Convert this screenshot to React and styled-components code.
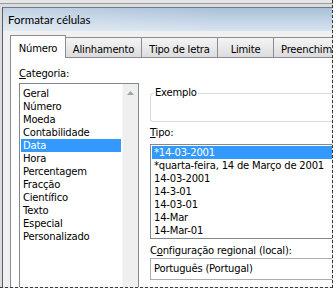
import styled, { createGlobalStyle } from "styled-components";

const GlobalStyle = createGlobalStyle`
  html, body { margin: 0; padding: 0; background: #fff; }
  body {
    font-family: "DejaVu Sans", "Liberation Sans", sans-serif;
    font-size: 10px;
    letter-spacing: -0.2px;
    color: #000;
  }
`;

const Screen = styled.div`
  width: 336px;
  height: 289px;
  overflow: hidden;
  background: #fff;
`;

const Capture = styled.div`
  box-sizing: border-box;
  width: 333px;
  height: 288px;
  overflow: hidden;
  padding: 7px 0 0 2px;
  border-right: 1px dashed #3a3a3a;
  border-bottom: 1px dashed #3a3a3a;
  background: linear-gradient(#e6e6e6 0, #e6e6e6 3px, #9a9a9a 3px, #9a9a9a 4px, #dcdcdc 4px);
`;

const Window = styled.div`
  width: 360px;
  height: 300px;
  border-left: 1px solid #55606c;
  border-top: 1px solid #6d7b8a;
  background: #f0f0f0;
  display: flex;
  flex-direction: column;
`;

const TitleBar = styled.div`
  height: 23px;
  line-height: 23px;
  padding-left: 5px;
  font-family: "Lato", "Liberation Sans", sans-serif;
  font-size: 11.5px;
  letter-spacing: 0;
  background: linear-gradient(to right, rgba(255, 255, 255, 0.3), rgba(255, 255, 255, 0) 60%),
    linear-gradient(to bottom, #a9c0d8, #c3d4e6 55%, #d7e3ef);
`;

const Client = styled.div`
  flex: 1;
  padding: 4px 0 0 7px;
  background: #f0f0f0;
`;

const TabRow = styled.div`
  display: flex;
  align-items: flex-end;
  height: 22px;
  position: relative;
  z-index: 1;
`;

const Tab = styled.div`
  box-sizing: border-box;
  flex: none;
  width: ${(p) => p.$w}px;
  height: ${(p) => (p.$active ? 23 : 20)}px;
  margin-bottom: ${(p) => (p.$active ? -1 : 0)}px;
  margin-left: -1px;
  padding-top: 3px;
  padding-left: ${(p) => p.$pl || 0}px;
  display: flex;
  align-items: center;
  justify-content: ${(p) => (p.$pl ? "flex-start" : "center")};
  white-space: nowrap;
  overflow: hidden;
  border: 1px solid #898c95;
  border-bottom: none;
  position: relative;
  z-index: ${(p) => (p.$active ? 2 : 1)};
  background: ${(p) => (p.$active ? "#fff" : "linear-gradient(#f4f4f4, #e9e9e9 50%, #dcdcdc)")};
  &:first-child {
    margin-left: 0;
  }
`;

const Panel = styled.div`
  box-sizing: border-box;
  height: 260px;
  border: 1px solid #898c95;
  border-right: none;
  background: #fff;
  display: flex;
  gap: 11px;
  padding: 9px 0 0 8px;
`;

const LeftCol = styled.div`
  flex: none;
  width: 120px;
  display: flex;
  flex-direction: column;
`;

const RightCol = styled.div`
  flex: 1;
  display: flex;
  flex-direction: column;
`;

const Label = styled.div`
  line-height: 14px;
  height: 14px;
  margin-top: ${(p) => p.$mt || 0}px;
  white-space: nowrap;
  u {
    text-decoration: underline;
    text-underline-offset: 1px;
  }
`;

const ListBox = styled.div`
  margin-top: 2px;
  height: 230px;
  border: 1px solid #828790;
  display: flex;
  background: #fff;
`;

const Items = styled.div`
  flex: 1;
  padding-top: ${(p) => p.$pt || 0}px;
`;

const Item = styled.div`
  height: 13px;
  line-height: 13px;
  margin-left: 1px;
  margin-right: ${(p) => p.$mr || 0}px;
  padding-left: 2px;
  white-space: nowrap;
  background: ${(p) => (p.$selected ? "#3399ff" : "transparent")};
  color: ${(p) => (p.$selected ? "#fff" : "#000")};
`;

const ScrollBar = styled.div`
  flex: none;
  width: 16px;
  background: #efefef;
  border-left: 1px solid #f7f7f7;
  box-sizing: border-box;
`;

const ScrollButton = styled.div`
  height: 17px;
  display: flex;
  align-items: center;
  justify-content: center;
`;

const Group = styled.fieldset`
  box-sizing: border-box;
  margin: 19px 0 0;
  padding: 0;
  min-width: 0;
  height: 36px;
  border: 1px solid #d5dfe5;
  border-right: none;
  border-radius: 3px 0 0 3px;
  legend {
    margin-left: 3px;
    padding: 0 1px;
    line-height: 14px;
  }
`;

const TypeList = styled.div`
  margin-top: 4px;
  border: 1px solid #828790;
  border-right: none;
  padding: 1px 0;
  background: #fff;
`;

const Combo = styled.div`
  box-sizing: border-box;
  height: 22px;
  line-height: 20px;
  padding-left: 3px;
  border: 1px solid #acacac;
  border-right: none;
  background: #fff;
  white-space: nowrap;
`;

const categories = [
  "Geral",
  "Número",
  "Moeda",
  "Contabilidade",
  "Data",
  "Hora",
  "Percentagem",
  "Fracção",
  "Científico",
  "Texto",
  "Especial",
  "Personalizado",
];

const types = [
  "*14-03-2001",
  "*quarta-feira, 14 de Março de 2001",
  "14-03-2001",
  "14-3-01",
  "14-03-01",
  "14-Mar",
  "14-Mar-01",
];

const tabs = [
  { name: "Número", w: 56, active: true },
  { name: "Alinhamento", w: 77 },
  { name: "Tipo de letra", w: 77 },
  { name: "Limite", w: 57 },
  { name: "Preenchimento", w: 100, pl: 7 },
];

export default function App() {
  return (
    <>
      <GlobalStyle />
      <Screen>
        <Capture>
          <Window>
            <TitleBar>Formatar células</TitleBar>
            <Client>
              <TabRow>
                {tabs.map((t) => (
                  <Tab key={t.name} $w={t.w} $pl={t.pl} $active={t.active}>
                    {t.name}
                  </Tab>
                ))}
              </TabRow>
              <Panel>
                <LeftCol>
                  <Label>
                    <u>C</u>ategoria:
                  </Label>
                  <ListBox>
                    <Items $pt={3}>
                      {categories.map((c) => (
                        <Item key={c} $mr={1} $selected={c === "Data"}>
                          {c}
                        </Item>
                      ))}
                    </Items>
                    <ScrollBar>
                      <ScrollButton>
                        <svg width="7" height="4" viewBox="0 0 7 4">
                          <path d="M0 4 L3.5 0 L7 4 Z" fill="#a3a3a3" />
                        </svg>
                      </ScrollButton>
                    </ScrollBar>
                  </ListBox>
                </LeftCol>
                <RightCol>
                  <Group>
                    <legend>Exemplo</legend>
                  </Group>
                  <Label $mt={4}>
                    <u>T</u>ipo:
                  </Label>
                  <TypeList>
                    {types.map((t, i) => (
                      <Item key={t} $selected={i === 0}>
                        {t}
                      </Item>
                    ))}
                  </TypeList>
                  <Label $mt={5}>
                    C<u>o</u>nfiguração regional (local):
                  </Label>
                  <Combo>Português (Portugal)</Combo>
                </RightCol>
              </Panel>
            </Client>
          </Window>
        </Capture>
      </Screen>
    </>
  );
}
